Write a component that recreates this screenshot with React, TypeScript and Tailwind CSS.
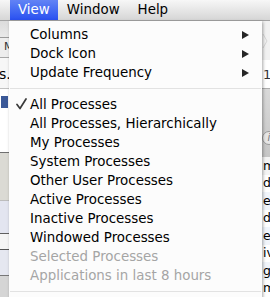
import React from 'react';

type Item = {
  label: string;
  checked?: boolean;
  submenu?: boolean;
  disabled?: boolean;
};

const topItems: Item[] = [
  { label: 'Columns', submenu: true },
  { label: 'Dock Icon', submenu: true },
  { label: 'Update Frequency', submenu: true },
];

const processItems: Item[] = [
  { label: 'All Processes', checked: true },
  { label: 'All Processes, Hierarchically' },
  { label: 'My Processes' },
  { label: 'System Processes' },
  { label: 'Other User Processes' },
  { label: 'Active Processes' },
  { label: 'Inactive Processes' },
  { label: 'Windowed Processes' },
  { label: 'Selected Processes', disabled: true },
  { label: 'Applications in last 8 hours', disabled: true },
];

// litery z tabeli procesów widoczne z prawej strony menu
const tableRows = [
  { text: 'm', h: 'h-[18px]', bg: 'bg-[#f4f4f4]' },
  { text: 'd', h: 'h-[17px]', bg: 'bg-white' },
  { text: 'e', h: 'h-[18px]', bg: 'bg-[#f1f5fb]' },
  { text: 'd', h: 'h-[17px]', bg: 'bg-white' },
  { text: 'e', h: 'h-[18px]', bg: 'bg-[#f1f5fb]' },
  { text: 'iv', h: 'h-[17px]', bg: 'bg-white' },
  { text: 'g', h: 'h-[18px]', bg: 'bg-[#f1f5fb]' },
  { text: 'm', h: 'h-[17px]', bg: 'bg-white' },
];

function Check() {
  return (
    <svg width="11" height="12" viewBox="0 0 11 12" className="absolute left-[7px] top-[3px]">
      <path d="M1 6.5 L4 10.5 L10 1" fill="none" stroke="#3a3a3a" strokeWidth="1.7" strokeLinecap="round" strokeLinejoin="round" />
    </svg>
  );
}

function Arrow() {
  return (
    <svg width="7" height="8" viewBox="0 0 7 8" className="absolute right-[13px] top-[6px]">
      <path d="M0 0 L7 4 L0 8 Z" fill="#262626" />
    </svg>
  );
}

function MenuRow({ item }: { item: Item }) {
  return (
    <div
      className={`relative h-[19px] flex items-center pl-[21px] ${
        item.disabled ? 'text-[#a5a5a5]' : 'text-black'
      }`}
    >
      {item.checked && <Check />}
      <span className="leading-none">{item.label}</span>
      {item.submenu && <Arrow />}
    </div>
  );
}

function Separator() {
  return (
    <div className="h-[13px] flex items-center px-[1px]">
      <div className="h-px w-full bg-[#e2e2e2]" />
    </div>
  );
}

export default function App() {
  return (
    <div
      className="relative w-[270px] h-[297px] overflow-hidden bg-[#ececec]"
      style={{ fontFamily: '"DejaVu Sans", "Liberation Sans", sans-serif' }}
    >
      {/* Pasek menu */}
      <div className="h-[20px] flex items-stretch bg-gradient-to-b from-[#f7f7f7] to-[#d6d6d6] border-b border-[#a3a3a3] box-content text-[13.4px] text-black">
        <div className="ml-[10px] px-[8px] flex items-center bg-gradient-to-b from-[#6283f5] to-[#2a4ff0] text-white">
          View
        </div>
        <div className="px-[9px] flex items-center">Window</div>
        <div className="px-[9px] flex items-center">Help</div>
      </div>

      {/* Tło: okna pod menu */}
      <div className="flex h-[276px]">
        <div className="w-[9px] flex flex-col overflow-hidden">
          <div className="h-[16px] bg-gradient-to-b from-[#dcdcdc] to-[#e9e9e9]" />
          <div className="h-px bg-[#9a9a9a]" />
          <div className="h-[19px] bg-[#ededed] flex items-center pl-[4px] text-[11px] text-[#333]">M</div>
          <div className="h-px bg-[#a8a8a8]" />
          <div className="h-[30px] bg-[#f7f7f7] flex items-end pb-[7px] -ml-[1px] text-[14px] leading-none text-black">s.</div>
          <div className="h-px bg-[#c2c2c2]" />
          <div className="h-[63px] bg-white pt-[7px] pl-[1px]">
            <div className="w-[7px] h-[12px] bg-[#3b5998]" />
          </div>
          <div className="h-px bg-[#707070]" />
          <div className="h-[47px] bg-[#dbdad4]" />
          <div className="h-px bg-[#bdbdbd]" />
          <div className="h-[32px] bg-[#e3e5f0]" />
          <div className="h-px bg-[#606060]" />
          <div className="h-[15px] bg-[#f5f5f5]" />
          <div className="h-px bg-[#555]" />
          <div className="h-[25px] bg-[#e5e7f0]" />
          <div className="h-px bg-[#777]" />
          <div className="flex-1 bg-[#d5d5d5]" />
        </div>

        <div className="flex-1 bg-white" />

        <div className="w-[8px] flex flex-col overflow-hidden">
          <div className="h-[39px] bg-[#f1f1f1] pt-[12px]">
            <svg width="6" height="16" viewBox="0 0 6 16">
              <path d="M1 1 L5 8 L1 15" fill="none" stroke="#d6d6d6" strokeWidth="1" />
            </svg>
          </div>
          <div className="h-[28px] bg-white flex items-center pl-[1px] text-[13px] leading-none text-[#333]">1</div>
          <div className="h-px bg-[#adadad]" />
          <div className="h-[68px] bg-gradient-to-b from-[#d9d9d9] to-[#c6c6c6] pt-[42px]">
            <div className="w-[14px] h-[14px] rounded-full bg-[#e6e6e6] border border-[#9a9a9a] flex items-center justify-center text-[10px] italic text-[#777] leading-none">
              i
            </div>
          </div>
          {tableRows.map((r, i) => (
            <div key={i} className={`${r.h} ${r.bg} flex items-center pl-[1px] text-[12.5px] leading-none text-black`}>
              {r.text}
            </div>
          ))}
        </div>
      </div>

      {/* Rozwinięte menu View */}
      <div className="absolute left-[9px] top-[21px] w-[253px] h-[290px] bg-[#fcfcfc] shadow-[1px_1px_3px_rgba(0,0,0,0.35)] pt-[4px] text-[13.4px]">
        {topItems.map((item) => (
          <MenuRow key={item.label} item={item} />
        ))}
        <Separator />
        {processItems.map((item) => (
          <MenuRow key={item.label} item={item} />
        ))}
        <Separator />
      </div>
    </div>
  );
}
